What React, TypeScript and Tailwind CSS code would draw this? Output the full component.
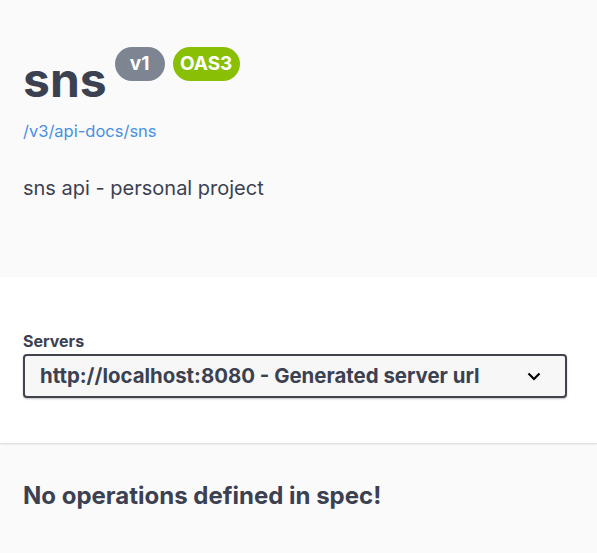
export default function App() {
  return (
    <div
      className="min-h-[553px] bg-[#fafafa] text-[#3b4151]"
      style={{ fontFamily: 'Inter, "Noto Sans", sans-serif' }}
    >
      {/* info */}
      <div className="h-[277px] px-[23px] pt-[46px]">
        <div className="flex items-start">
          <h2 className="text-[48px] font-bold leading-[68px]">sns</h2>
          <div className="ml-[8px] mt-[1px] flex gap-[8px]">
            <span className="flex h-[34px] w-[50px] items-center justify-center rounded-[17px] bg-[#7d8492] text-[19px] font-bold text-white">
              v1
            </span>
            <span className="flex h-[34px] w-[67px] items-center justify-center rounded-[17px] bg-[#89bf04] text-[19px] font-bold text-white">
              OAS3
            </span>
          </div>
        </div>
        <a className="mt-[6px] block text-[16.5px] leading-[22px] text-[#4990e2]">/v3/api-docs/sns</a>
        <p className="mt-[32px] text-[20px] leading-[28px]">sns api - personal project</p>
      </div>

      {/* servers */}
      <div className="h-[166px] bg-white px-[23px] pt-[53px] shadow-[0_1px_2px_rgba(0,0,0,0.15)]">
        <div className="text-[16px] font-bold leading-[22px]">Servers</div>
        <div className="mt-[2px] flex h-[44px] w-[544px] items-center justify-between rounded-[4px] border-2 border-[#41444e] bg-[#f7f7f7] pl-[15px] pr-[24px] shadow-[0_1px_2px_rgba(0,0,0,0.25)]">
          <span className="text-[20.4px] font-bold">http://localhost:8080 - Generated server url</span>
          <svg width="14" height="9" viewBox="0 0 14 9" fill="none">
            <path d="M1.5 1.5 L7 7 L12.5 1.5" stroke="#000" strokeWidth="2.2" />
          </svg>
        </div>
      </div>

      {/* operations */}
      <div className="px-[23px] pt-[35px]">
        <h3 className="text-[24px] font-bold">No operations defined in spec!</h3>
      </div>
    </div>
  );
}
